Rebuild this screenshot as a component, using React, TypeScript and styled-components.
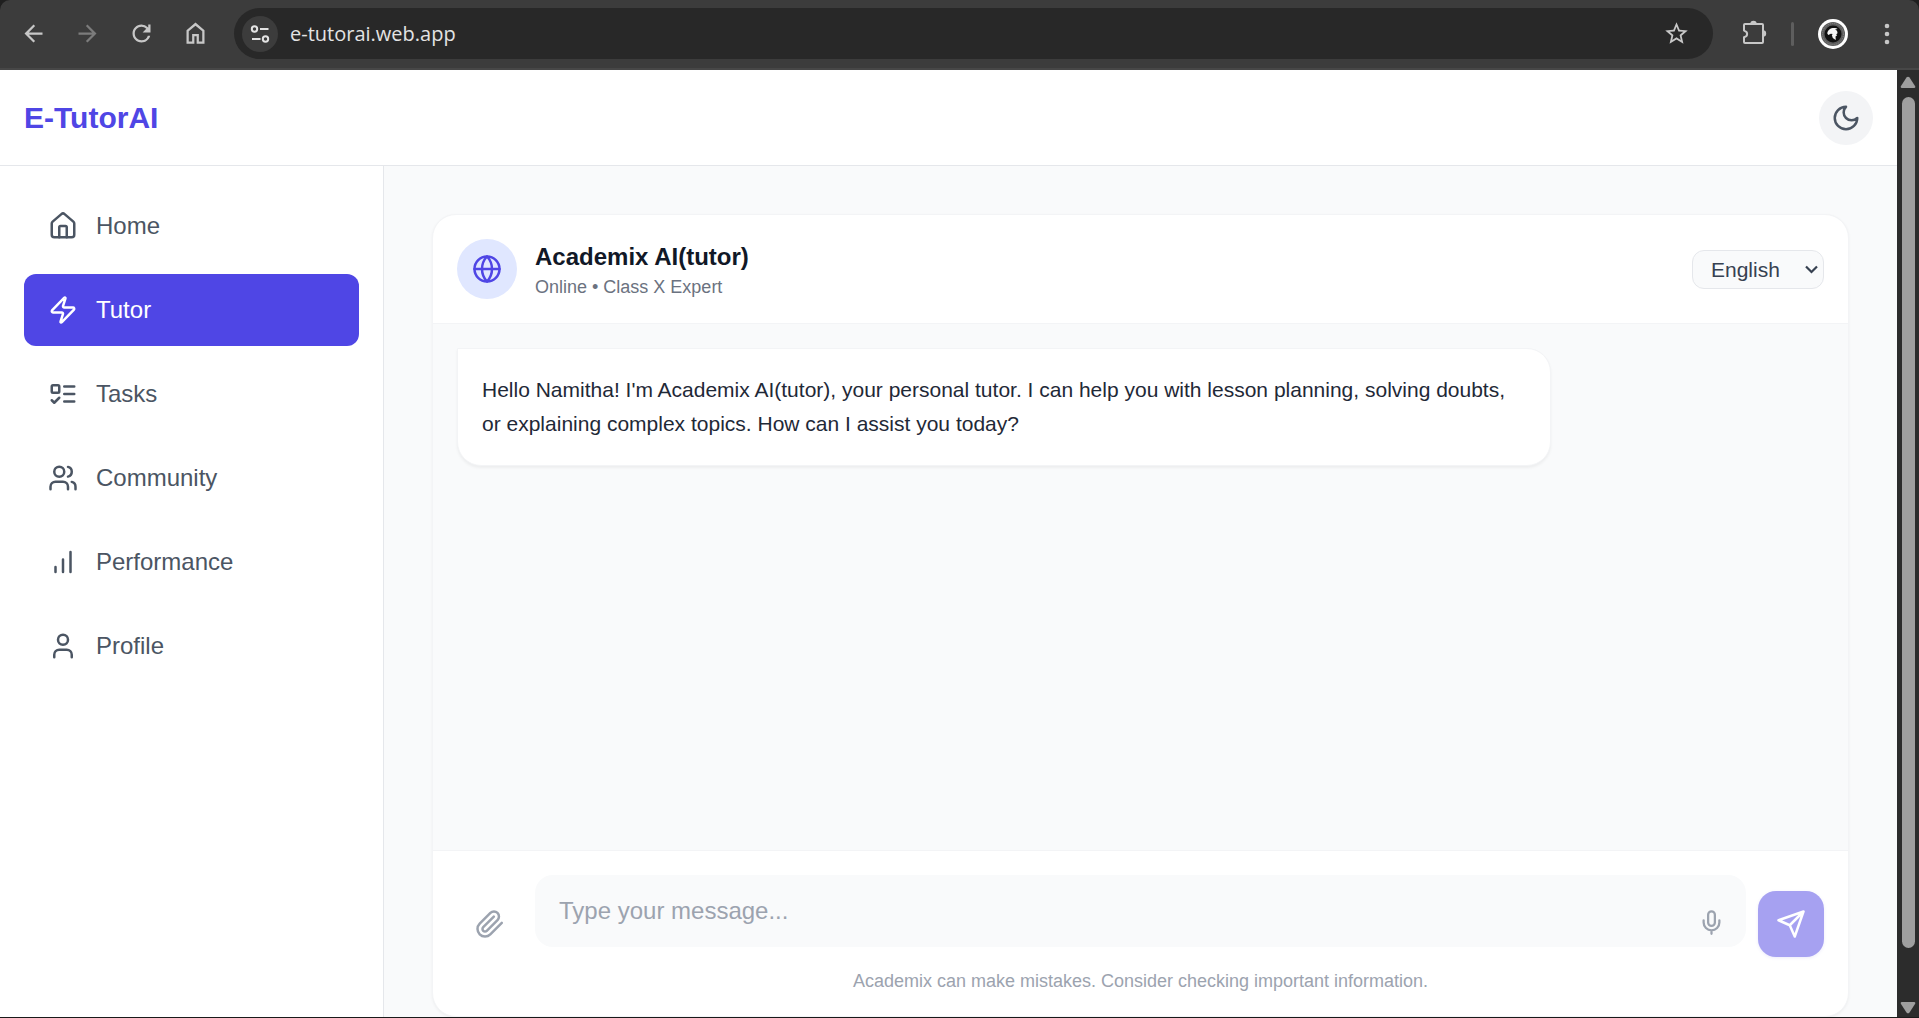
import React, { useState } from "react";
import styled, { createGlobalStyle } from "styled-components";

const GlobalStyle = createGlobalStyle`
  *, *::before, *::after { box-sizing: border-box; }
  body { margin: 0; background: #1f1f1f; font-family: "Liberation Sans", Arial, sans-serif; }
  button, select, textarea { font-family: inherit; }
  h1, h2, p, ul { margin: 0; padding: 0; }
  svg { display: block; flex-shrink: 0; }
`;

/* ---------- browser frame ---------- */

const Window = styled.div`
  display: flex;
  flex-direction: column;
  height: 100vh;
  border-bottom: 1px solid #1a1a1a;
`;

const Toolbar = styled.div`
  display: flex;
  align-items: center;
  padding: 8px 5px 9px 6px;
  background: #3c3c3c;
  border-bottom: 2px solid #474747;
  border-radius: 10px 10px 0 0;
`;

const ToolButton = styled.button<{ $dim?: boolean }>`
  display: flex;
  align-items: center;
  justify-content: center;
  width: 54px;
  height: 51px;
  padding: 0;
  border: 0;
  background: none;
  color: ${(p) => (p.$dim ? "#7c7c7c" : "#c7c7c7")};
`;

const AddressBar = styled.div`
  display: flex;
  flex: 1;
  align-items: center;
  height: 51px;
  margin: 0 14px 0 12px;
  padding: 0 10px 0 8px;
  border-radius: 26px;
  background: #282828;
`;

const SiteInfo = styled.button`
  display: flex;
  align-items: center;
  justify-content: center;
  width: 36px;
  height: 36px;
  padding: 0;
  border: 0;
  border-radius: 50%;
  background: #3c3c3c;
  color: #e3e3e3;
`;

const Address = styled.span`
  flex: 1;
  padding-left: 12px;
  color: #e3e3e3;
  font: 20px/28px "Open Sans", "Noto Sans", sans-serif;
`;

const ToolDivider = styled.span`
  width: 3px;
  height: 24px;
  margin: 0 12px 0 10px;
  border-radius: 2px;
  background: #5e5e5e;
`;

const Viewport = styled.div`
  display: flex;
  flex: 1;
  min-height: 0;
`;

const Scrollbar = styled.div`
  display: flex;
  flex-direction: column;
  align-items: center;
  width: 22px;
  padding: 6px 0 3px;
  background: #2c2c2c;
  color: #9f9f9f;
`;

const Track = styled.div`
  flex: 1;
  width: 13px;
  margin: 8px 0;
`;

const Thumb = styled.div`
  height: 95%;
  border-radius: 7px;
  background: #9f9f9f;
`;

/* ---------- application ---------- */

const Page = styled.div`
  display: flex;
  flex: 1;
  flex-direction: column;
  min-width: 0;
  background: #f9fafb;
`;

const Header = styled.header`
  display: flex;
  align-items: center;
  justify-content: space-between;
  height: 96px;
  padding: 0 24px;
  border-bottom: 1px solid #e5e7eb;
  background: #fff;
`;

const Brand = styled.h1`
  color: #4f46e5;
  font-size: 30px;
  line-height: 42px;
`;

const ThemeToggle = styled.button`
  display: flex;
  padding: 12px;
  border: 0;
  border-radius: 50%;
  background: #f3f4f6;
  color: #4b5563;
`;

const Body = styled.div`
  display: flex;
  flex: 1;
  min-height: 0;
`;

const Sidebar = styled.nav`
  width: 384px;
  padding: 24px;
  border-right: 1px solid #e5e7eb;
  background: #fff;
`;

const NavList = styled.ul`
  display: flex;
  flex-direction: column;
  gap: 12px;
  list-style: none;
`;

const NavLink = styled.a<{ $active: boolean }>`
  display: flex;
  align-items: center;
  gap: 18px;
  height: 72px;
  padding: 0 24px;
  border-radius: 12px;
  background: ${(p) => (p.$active ? "#4f46e5" : "transparent")};
  color: ${(p) => (p.$active ? "#fff" : "#4b5563")};
  font-size: 24px;
  line-height: 36px;
  text-decoration: none;
`;

const Main = styled.main`
  display: flex;
  flex: 1;
  min-width: 0;
  padding: 48px 48px 0;
`;

const ChatCard = styled.section`
  display: flex;
  flex: 1;
  flex-direction: column;
  min-width: 0;
  overflow: hidden;
  border: 1px solid #f3f4f6;
  border-radius: 24px;
  background: #fff;
  box-shadow: 0 1px 3px rgba(0, 0, 0, 0.05);
`;

const ChatHeader = styled.div`
  display: flex;
  align-items: center;
  gap: 18px;
  padding: 24px;
  border-bottom: 1px solid #f3f4f6;
`;

const TutorBadge = styled.div`
  display: flex;
  align-items: center;
  justify-content: center;
  width: 60px;
  height: 60px;
  border-radius: 50%;
  background: #e0e7ff;
  color: #4f46e5;
`;

const TutorText = styled.div`
  flex: 1;
`;

const TutorName = styled.h2`
  color: #111827;
  font-size: 24px;
  line-height: 36px;
`;

const TutorStatus = styled.p`
  color: #6b7280;
  font-size: 18px;
  line-height: 24px;
`;

const LanguagePicker = styled.label`
  position: relative;
  display: flex;
  color: #374151;
`;

const LanguageSelect = styled.select`
  width: 132px;
  height: 39px;
  padding: 0 36px 0 18px;
  border: 1px solid #e5e7eb;
  border-radius: 12px;
  background: #f9fafb;
  color: inherit;
  font-size: 21px;
  appearance: none;
`;

const SelectChevron = styled.svg`
  position: absolute;
  top: 15px;
  right: 6px;
  pointer-events: none;
`;

const Messages = styled.div`
  flex: 1;
  padding: 24px;
  background: #f9fafb;
`;

const Bubble = styled.p`
  width: fit-content;
  max-width: 80%;
  padding: 24px;
  border: 1px solid #f3f4f6;
  border-radius: 0 24px 24px 24px;
  background: #fff;
  box-shadow: 0 2px 3px rgba(0, 0, 0, 0.05);
  color: #1f2937;
  font-size: 21px;
  line-height: 34px;
`;

const Composer = styled.div`
  padding: 24px 24px 23px;
  border-top: 1px solid #f3f4f6;
`;

const ComposerRow = styled.div`
  display: flex;
  align-items: flex-end;
  gap: 12px;
`;

const AttachButton = styled.button`
  display: flex;
  padding: 18px;
  border: 0;
  background: none;
  color: #9ca3af;
`;

const InputWrap = styled.div`
  position: relative;
  display: flex;
  flex: 1;
  padding-bottom: 10px;
`;

const MessageInput = styled.textarea`
  flex: 1;
  height: 72px;
  padding: 24px 72px 24px 24px;
  border: 0;
  border-radius: 18px;
  background: #f9fafb;
  color: #111827;
  font-size: 24px;
  line-height: 24px;
  resize: none;
  overflow: hidden;
  &::placeholder { color: #9ca3af; }
`;

const MicButton = styled.button`
  position: absolute;
  right: 12px;
  bottom: 12px;
  display: flex;
  padding: 9px;
  border: 0;
  background: none;
  color: #9ca3af;
`;

const SendButton = styled.button`
  display: flex;
  padding: 18px;
  border: 0;
  border-radius: 18px;
  background: #4f46e5;
  box-shadow: 0 1px 3px rgba(79, 70, 229, 0.2);
  color: #fff;
  opacity: 0.5;
`;

const Disclaimer = styled.p`
  margin-top: 12px;
  color: #9ca3af;
  font-size: 18px;
  line-height: 24px;
  text-align: center;
`;

/* ---------- icons ---------- */

const Icon = ({ size = 30, children }: { size?: number; children: React.ReactNode }) => (
  <svg width={size} height={size} viewBox="0 0 24 24" fill="none" stroke="currentColor"
    strokeWidth="2" strokeLinecap="round" strokeLinejoin="round" aria-hidden="true">
    {children}
  </svg>
);

const Glyph = ({ d }: { d: string }) => (
  <svg width="27" height="27" viewBox="0 0 24 24" fill="currentColor" aria-hidden="true">
    <path d={d} />
  </svg>
);

const navItems = [
  {
    label: "Home",
    icon: (
      <>
        <path d="M15 21v-8a1 1 0 0 0-1-1h-4a1 1 0 0 0-1 1v8" />
        <path d="M3 10a2 2 0 0 1 .709-1.528l7-5.999a2 2 0 0 1 2.582 0l7 5.999A2 2 0 0 1 21 10v9a2 2 0 0 1-2 2H5a2 2 0 0 1-2-2z" />
      </>
    ),
  },
  {
    label: "Tutor",
    icon: (
      <path d="M4 14a1 1 0 0 1-.78-1.63l9.9-10.2a.5.5 0 0 1 .86.46l-1.92 6.02A1 1 0 0 0 13 10h7a1 1 0 0 1 .78 1.63l-9.9 10.2a.5.5 0 0 1-.86-.46l1.92-6.02A1 1 0 0 0 11 14z" />
    ),
  },
  {
    label: "Tasks",
    icon: (
      <>
        <rect x="3" y="5" width="6" height="6" rx="1" />
        <path d="m3 17 2 2 4-4M13 6h8M13 12h8M13 18h8" />
      </>
    ),
  },
  {
    label: "Community",
    icon: (
      <>
        <path d="M16 21v-2a4 4 0 0 0-4-4H6a4 4 0 0 0-4 4v2" />
        <circle cx="9" cy="7" r="4" />
        <path d="M22 21v-2a4 4 0 0 0-3-3.87M16 3.13a4 4 0 0 1 0 7.75" />
      </>
    ),
  },
  { label: "Performance", icon: <path d="M12 20V10M18 20V4M6 20v-4" /> },
  {
    label: "Profile",
    icon: (
      <>
        <path d="M19 21v-2a4 4 0 0 0-4-4H9a4 4 0 0 0-4 4v2" />
        <circle cx="12" cy="7" r="4" />
      </>
    ),
  },
];

const BrowserToolbar = () => (
  <Toolbar>
    <ToolButton aria-label="Back">
      <Glyph d="M20 11H7.83l5.59-5.59L12 4l-8 8 8 8 1.41-1.41L7.83 13H20v-2z" />
    </ToolButton>
    <ToolButton $dim aria-label="Forward">
      <Glyph d="m12 4-1.41 1.41L16.17 11H4v2h12.17l-5.58 5.59L12 20l8-8z" />
    </ToolButton>
    <ToolButton aria-label="Reload">
      <Glyph d="M17.65 6.35A7.958 7.958 0 0 0 12 4c-4.42 0-7.99 3.58-7.99 8s3.57 8 7.99 8c3.73 0 6.84-2.55 7.73-6h-2.08A5.99 5.99 0 0 1 12 18c-3.31 0-6-2.69-6-6s2.69-6 6-6c1.66 0 3.14.69 4.22 1.78L13 11h7V4h-2v2.700z" />
    </ToolButton>
    <ToolButton aria-label="Home page">
      <Glyph d="M6 19h3v-6.500h6V19h3v-9l-6-5L6 10v9zm-2 2.200V9l8-6.800L20 9v12.200h-7v-6.700h-2v6.700H4z" />
    </ToolButton>
    <AddressBar>
      <SiteInfo aria-label="Site information">
        <svg width="20" height="20" viewBox="0 0 20 20" fill="none" stroke="currentColor" strokeWidth="2" aria-hidden="true">
          <circle cx="4.5" cy="5" r="2.7" />
          <path d="M10 5h8.5M2 15h8.5" />
          <circle cx="15.5" cy="15" r="2.7" />
        </svg>
      </SiteInfo>
      <Address>e-tutorai.web.app</Address>
      <ToolButton aria-label="Bookmark this tab">
        <Glyph d="m22 9.24-7.19-.62L12 2 9.19 8.63 2 9.24l5.46 4.73L5.82 21 12 17.27 18.18 21l-1.63-7.03L22 9.24zM12 15.4l-3.76 2.27 1-4.28-3.32-2.88 4.38-.38L12 6.1l1.71 4.04 4.38.38-3.32 2.88 1 4.28L12 15.4z" />
      </ToolButton>
    </AddressBar>
    <ToolButton aria-label="Extensions">
      <svg width="30" height="30" viewBox="0 0 30 30" fill="none" stroke="currentColor" strokeWidth="2" strokeLinejoin="round" aria-hidden="true">
        <path d="M6 5H23a1 1 0 0 1 1 1V23a1 1 0 0 1-1 1H6a1 1 0 0 1-1-1V18.200C9.200 17 9.200 12.800 5 11.600V6a1 1 0 0 1 1-1Z" />
        <path d="M11.300 5a3.200 3.200 0 0 1 6.400 0ZM24 11.300a3.200 3.200 0 0 1 0 6.400Z" fill="currentColor" stroke="none" />
      </svg>
    </ToolButton>
    <ToolDivider />
    <ToolButton aria-label="Profile menu">
      <svg width="30" height="30" viewBox="0 0 30 30" aria-hidden="true">
        <circle cx="15" cy="15" r="15" fill="#fff" />
        <circle cx="15" cy="15" r="12" fill="#5c5c5c" />
        <circle cx="15" cy="15" r="10.500" fill="none" stroke="#8a8a8a" strokeWidth="1" strokeDasharray="1 1" />
        <circle cx="15" cy="15" r="8.500" fill="#111" />
        <path d="M9.300 14.500C9.500 11 12.500 9 16 9c1.500 0 3 .2 3.500 1l-2.500.6c1.600.5 2.500 1.800 2.500 3.600l-1.200 1 .7 1.300-1.500 1 .3 3.500-3-2-1-3 1-1-2-.2-2.500 1.200z" fill="#f4f4f4" />
      </svg>
    </ToolButton>
    <ToolButton aria-label="Browser menu">
      <svg width="6" height="24" viewBox="0 0 6 24" fill="currentColor" aria-hidden="true">
        <circle cx="3" cy="4" r="2.300" />
        <circle cx="3" cy="12" r="2.300" />
        <circle cx="3" cy="20" r="2.300" />
      </svg>
    </ToolButton>
  </Toolbar>
);

const TutorChat = () => {
  const [language, setLanguage] = useState("English");
  const [draft, setDraft] = useState("");
  return (
    <ChatCard>
      <ChatHeader>
        <TutorBadge>
          <Icon>
            <circle cx="12" cy="12" r="10" />
            <path d="M12 2a14.500 14.500 0 0 0 0 20 14.500 14.500 0 0 0 0-20M2 12h20" />
          </Icon>
        </TutorBadge>
        <TutorText>
          <TutorName>Academix AI(tutor)</TutorName>
          <TutorStatus>Online • Class X Expert</TutorStatus>
        </TutorText>
        <LanguagePicker>
          <LanguageSelect aria-label="Language" value={language} onChange={(e) => setLanguage(e.target.value)}>
            <option>English</option>
          </LanguageSelect>
          <SelectChevron width="13" height="9" viewBox="0 0 13 9" fill="none" stroke="currentColor" strokeWidth="2.200" aria-hidden="true">
            <path d="m1 1.500 5.500 5.500L12 1.500" />
          </SelectChevron>
        </LanguagePicker>
      </ChatHeader>
      <Messages>
        <Bubble>
          Hello Namitha! I'm Academix AI(tutor), your personal tutor. I can help you with lesson
          planning, solving doubts, or explaining complex topics. How can I assist you today?
        </Bubble>
      </Messages>
      <Composer>
        <ComposerRow>
          <AttachButton aria-label="Attach a file">
            <Icon>
              <path d="m21.440 11.050-9.190 9.190a6 6 0 0 1-8.490-8.490l8.570-8.570A4 4 0 1 1 18 8.840l-8.590 8.570a2 2 0 0 1-2.830-2.830l8.490-8.480" />
            </Icon>
          </AttachButton>
          <InputWrap>
            <MessageInput
              aria-label="Message"
              rows={1}
              placeholder="Type your message..."
              value={draft}
              onChange={(e) => setDraft(e.target.value)}
            />
            <MicButton aria-label="Dictate">
              <Icon size={27}>
                <path d="M12 2a3 3 0 0 0-3 3v7a3 3 0 0 0 6 0V5a3 3 0 0 0-3-3Z" />
                <path d="M19 10v2a7 7 0 0 1-14 0v-2M12 19v3" />
              </Icon>
            </MicButton>
          </InputWrap>
          <SendButton aria-label="Send">
            <Icon>
              <path d="m22 2-7 20-4-9-9-4ZM22 2 11 13" />
            </Icon>
          </SendButton>
        </ComposerRow>
        <Disclaimer>Academix can make mistakes. Consider checking important information.</Disclaimer>
      </Composer>
    </ChatCard>
  );
};

export default function App() {
  return (
    <>
      <GlobalStyle />
      <Window>
        <BrowserToolbar />
        <Viewport>
          <Page>
            <Header>
              <Brand>E-TutorAI</Brand>
              <ThemeToggle aria-label="Switch to dark theme">
                <Icon>
                  <path d="M12 3a6 6 0 0 0 9 9 9 9 0 1 1-9-9Z" />
                </Icon>
              </ThemeToggle>
            </Header>
            <Body>
              <Sidebar aria-label="Main">
                <NavList>
                  {navItems.map((item) => (
                    <li key={item.label}>
                      <NavLink href="#" $active={item.label === "Tutor"}>
                        <Icon>{item.icon}</Icon>
                        {item.label}
                      </NavLink>
                    </li>
                  ))}
                </NavList>
              </Sidebar>
              <Main>
                <TutorChat />
              </Main>
            </Body>
          </Page>
          <Scrollbar aria-hidden="true">
            <svg width="16" height="13" viewBox="0 0 16 13" fill="currentColor">
              <path d="M6.500 1.500a2 2 0 0 1 3 0l5.500 8.500q1 2-1 2H2q-2 0-1-2z" />
            </svg>
            <Track>
              <Thumb />
            </Track>
            <svg width="16" height="13" viewBox="0 0 16 13" fill="currentColor">
              <path d="M6.500 11.500a2 2 0 0 0 3 0L15 3q1-2-1-2H2Q0 1 1 3z" />
            </svg>
          </Scrollbar>
        </Viewport>
      </Window>
    </>
  );
}
